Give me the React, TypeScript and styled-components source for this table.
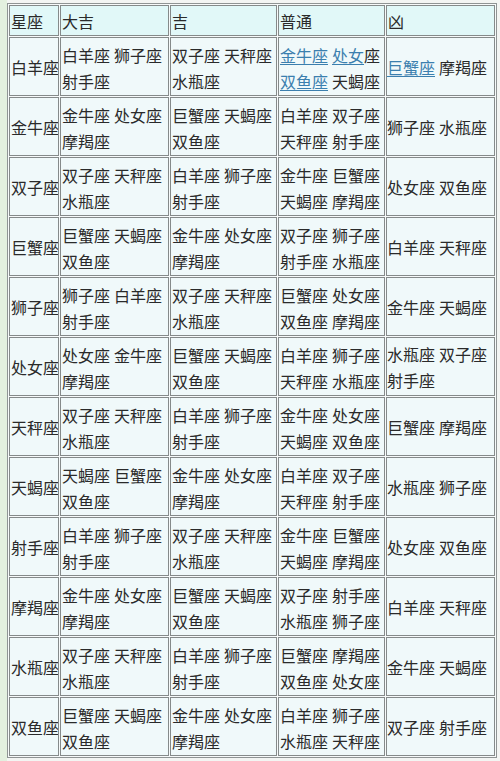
import React from 'react';
import styled, { createGlobalStyle } from 'styled-components';

type Word = { text: string; link?: number };
type Cell = Word[][];

type Row = {
  sign: string;
  best: string[];
  good: string[];
  normal: Cell;
  bad: string[];
};

const GlobalStyle = createGlobalStyle`
  html, body {
    margin: 0;
    padding: 0;
    background: #edf4ec;
  }
  body {
    font-family: "Noto Sans CJK SC", "Noto Sans", sans-serif;
  }
`;

const plain = (words: string[]): Cell => [
  words.slice(0, 2).map((text) => ({ text })),
  ...(words.length > 2 ? [words.slice(2).map((text) => ({ text }))] : []),
];

const rows: Row[] = [
  {
    sign: '白羊座',
    best: ['白羊座', '狮子座', '射手座'],
    good: ['双子座', '天秤座', '水瓶座'],
    normal: [
      [{ text: '金牛座', link: 3 }, { text: '处女座', link: 2 }],
      [{ text: '双鱼座', link: 3 }, { text: '天蝎座' }],
    ],
    bad: ['巨蟹座', '摩羯座'],
  },
  {
    sign: '金牛座',
    best: ['金牛座', '处女座', '摩羯座'],
    good: ['巨蟹座', '天蝎座', '双鱼座'],
    normal: plain(['白羊座', '双子座', '天秤座', '射手座']),
    bad: ['狮子座', '水瓶座'],
  },
  {
    sign: '双子座',
    best: ['双子座', '天秤座', '水瓶座'],
    good: ['白羊座', '狮子座', '射手座'],
    normal: plain(['金牛座', '巨蟹座', '天蝎座', '摩羯座']),
    bad: ['处女座', '双鱼座'],
  },
  {
    sign: '巨蟹座',
    best: ['巨蟹座', '天蝎座', '双鱼座'],
    good: ['金牛座', '处女座', '摩羯座'],
    normal: plain(['双子座', '狮子座', '射手座', '水瓶座']),
    bad: ['白羊座', '天秤座'],
  },
  {
    sign: '狮子座',
    best: ['狮子座', '白羊座', '射手座'],
    good: ['双子座', '天秤座', '水瓶座'],
    normal: plain(['巨蟹座', '处女座', '双鱼座', '摩羯座']),
    bad: ['金牛座', '天蝎座'],
  },
  {
    sign: '处女座',
    best: ['处女座', '金牛座', '摩羯座'],
    good: ['巨蟹座', '天蝎座', '双鱼座'],
    normal: plain(['白羊座', '狮子座', '天秤座', '水瓶座']),
    bad: ['水瓶座', '双子座', '射手座'],
  },
  {
    sign: '天秤座',
    best: ['双子座', '天秤座', '水瓶座'],
    good: ['白羊座', '狮子座', '射手座'],
    normal: plain(['金牛座', '处女座', '天蝎座', '双鱼座']),
    bad: ['巨蟹座', '摩羯座'],
  },
  {
    sign: '天蝎座',
    best: ['天蝎座', '巨蟹座', '双鱼座'],
    good: ['金牛座', '处女座', '摩羯座'],
    normal: plain(['白羊座', '双子座', '天秤座', '射手座']),
    bad: ['水瓶座', '狮子座'],
  },
  {
    sign: '射手座',
    best: ['白羊座', '狮子座', '射手座'],
    good: ['双子座', '天秤座', '水瓶座'],
    normal: plain(['金牛座', '巨蟹座', '天蝎座', '摩羯座']),
    bad: ['处女座', '双鱼座'],
  },
  {
    sign: '摩羯座',
    best: ['金牛座', '处女座', '摩羯座'],
    good: ['巨蟹座', '天蝎座', '双鱼座'],
    normal: plain(['双子座', '射手座', '水瓶座', '狮子座']),
    bad: ['白羊座', '天秤座'],
  },
  {
    sign: '水瓶座',
    best: ['双子座', '天秤座', '水瓶座'],
    good: ['白羊座', '狮子座', '射手座'],
    normal: plain(['巨蟹座', '摩羯座', '双鱼座', '处女座']),
    bad: ['金牛座', '天蝎座'],
  },
  {
    sign: '双鱼座',
    best: ['巨蟹座', '天蝎座', '双鱼座'],
    good: ['金牛座', '处女座', '摩羯座'],
    normal: plain(['白羊座', '狮子座', '水瓶座', '天秤座']),
    bad: ['双子座', '射手座'],
  },
];

const badCell = (row: Row): Cell => {
  if (row.sign === '白羊座') {
    return [[{ text: '巨蟹座', link: 3 }, { text: '摩羯座' }]];
  }
  return plain(row.bad);
};

const Lines: React.FC<{ cell: Cell }> = ({ cell }) => (
  <>
    {cell.map((line, i) => (
      <Line key={i}>
        {line.map((w, j) => (
          <span key={j}>
            {w.link ? (
              <>
                <Link>{w.text.slice(0, w.link)}</Link>
                {w.text.slice(w.link)}
              </>
            ) : (
              w.text
            )}
          </span>
        ))}
      </Line>
    ))}
  </>
);

const App: React.FC = () => (
  <Page>
    <GlobalStyle />
    <Table>
      <colgroup>
        <col style={{ width: 50 }} />
        <col style={{ width: 109 }} />
        <col style={{ width: 107 }} />
        <col style={{ width: 107 }} />
        <col />
      </colgroup>
      <thead>
        <tr>
          <Head>星座</Head>
          <Head>大吉</Head>
          <Head>吉</Head>
          <Head>普通</Head>
          <Head>凶</Head>
        </tr>
      </thead>
      <tbody>
        {rows.map((row) => (
          <tr key={row.sign}>
            <Data $middle>{row.sign}</Data>
            <Data>
              <Lines cell={plain(row.best)} />
            </Data>
            <Data>
              <Lines cell={plain(row.good)} />
            </Data>
            <Data>
              <Lines cell={row.normal} />
            </Data>
            <Data $middle $tight>
              <Lines cell={badCell(row)} />
            </Data>
          </tr>
        ))}
      </tbody>
    </Table>
  </Page>
);

const Page = styled.div`
  min-height: 761px;
  padding: 3px 3px 0 7px;
  box-sizing: border-box;
  background: linear-gradient(to right, #e3f0df 0 7px, #f3f5f3 7px);
`;

const Table = styled.table`
  width: 490px;
  table-layout: fixed;
  border-collapse: separate;
  border-spacing: 1px;
  border: 1px solid #8f9494;
  background: #f7fafa;
  font-size: 16px;
  color: #2a2a2a;
`;

const Head = styled.th`
  height: 31px;
  box-sizing: border-box;
  padding: 0 0 0 1px;
  text-align: left;
  font-weight: normal;
  background: #e1f8f8;
  border: 1px solid #858a8a;
  line-height: 28px;
`;

const Data = styled.td<{ $middle?: boolean; $tight?: boolean }>`
  height: 59px;
  box-sizing: border-box;
  padding: ${(p) => (p.$tight ? '0' : '0 0 0 1px')};
  vertical-align: ${(p) => (p.$middle ? 'middle' : 'top')};
  background: #f0f9fa;
  border: 1px solid #858a8a;
  white-space: nowrap;
  overflow: hidden;
  line-height: 26px;

  & > div:first-child {
    padding-top: ${(p) => (p.$middle ? '0' : '4px')};
  }
`;

const Line = styled.div`
  display: flex;
  gap: 4px;
`;

const Link = styled.span`
  color: #3b7fae;
  text-decoration: underline;
  text-underline-offset: 2px;
`;

export default App;
